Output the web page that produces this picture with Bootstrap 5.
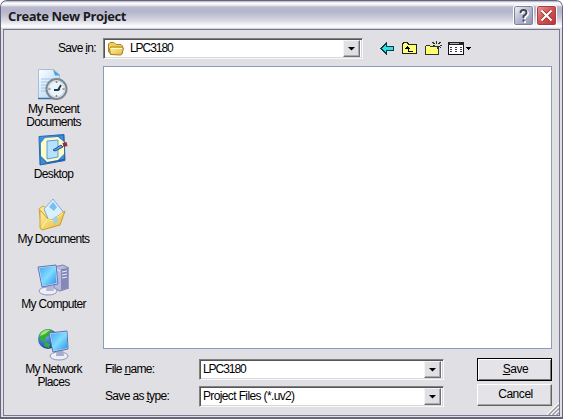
<!DOCTYPE html>
<html lang="en">
<head>
<meta charset="utf-8">
<meta name="viewport" content="width=device-width, initial-scale=1">
<title>Create New Project</title>
<link href="https://cdn.jsdelivr.net/npm/bootstrap@5.3.0/dist/css/bootstrap.min.css" rel="stylesheet">
<style>
html,body{height:100%;overflow:hidden;background:#fff}
body{font:12px/13px "Liberation Sans",Arial,sans-serif;letter-spacing:-.68px;color:#000}
svg{display:block;flex:none}
u{text-underline-offset:1px;text-decoration-thickness:1px}
.dialog{width:563px;height:419px;background:#e0dfe3;border:solid #65657f;border-width:1px 1px 2px;border-radius:7px 7px 0 0;overflow:hidden}
.titlebar{height:28px;padding:1px 5px 0 7px;background:linear-gradient(#a9a9bd 0,#fff 2px,#eeeef4 4px,#b9b9cf 6px,#b4b4cb 10px,#c0c0d3 14px,#d5d5e2 19px,#f4f4f8 24px,#fff 26px,#c8c8d6 28px)}
.titlebar h1{font:bold 13px/18px "Open Sans","Noto Sans",sans-serif;letter-spacing:-.4px;color:#1b1b20}
.cap{width:21px;height:21px;border:1px solid #fff;border-radius:3px;padding:0;overflow:hidden}
.cap-help{background:linear-gradient(135deg,#f3f4fa,#b5b8d0 50%,#9093af);box-shadow:inset 0 0 0 1px #7e8199}
.cap-close{background:linear-gradient(135deg,#e99b94,#cf524e 50%,#b83237);box-shadow:inset 0 0 0 1px #a63d45}
.client{height:387px;margin:0 2px;border:1px solid #77778e;border-top-color:#747488;display:grid;grid-template-columns:99px 449px;grid-template-rows:36px 283px 66px;position:relative}
.lookrow{padding:8px 0 7px}
.combo{height:21px;background:#fff;border:1px solid;border-color:#808080 #f8f8fa #f8f8fa #808080;box-shadow:inset 1px 1px #555,inset -1px -1px #d8d7dc;padding:2px 2px 2px 3px}
.combo-look{width:260px}
.combo-field{width:245px}
.code{letter-spacing:-1.05px}
.drop{width:17px;height:17px;background:#e0dfe3;border:1px solid;border-color:#f4f4f5 #707070 #707070 #f4f4f5;box-shadow:inset -1px -1px #aaa9ad}
.places{grid-row:2/4;padding-top:3px}
.place{height:65px;text-align:center}
.place svg{margin:0 0 1px 31px}
.filelist{background:#fff;border:1px solid #8a9db8}
.fields{display:grid;grid-template-columns:96px 245px 33px 75px;padding-top:9px;align-items:start}
.stack{display:grid;grid-template-rows:21px 21px;row-gap:6px;padding-top:1px}
.stack label{padding:4px 0 0 2px;letter-spacing:-.66px}
.buttons{display:grid;grid-template-rows:23px 22px;row-gap:3px}
.push{height:22px;background:#e4e3e7;border:1px solid;border-color:#fff #626262 #626262 #fff;box-shadow:inset -1px -1px #a4a3a8;font-size:12px;letter-spacing:-.45px;border-radius:0;padding:0 0 2px 2px;line-height:16px;color:#000}
.push-default{height:23px;border-color:#000;box-shadow:inset 1px 1px #fff,inset -1px -1px #77777a}
.grip{position:absolute;right:0;bottom:0}
</style>
</head>
<body>
<main class="dialog">
<header class="titlebar d-flex align-items-center">
<h1 class="m-0 me-auto">Create New Project</h1>
<div class="d-flex" style="gap:2px">
<button class="cap cap-help" aria-label="Help"><svg width="19" height="19" fill="none" stroke-width="2"><path d="M7 7q0-3 3-3t3 2.500q0 2-3 4V12M10 14v2" stroke="#fff" transform="translate(1 1)"/><path d="M6.500 7q0-3 3-3t3 2.500q0 2-3 3.500V12M9.500 13.500v2" stroke="#444554" stroke-width="1.800"/></svg></button>
<button class="cap cap-close" aria-label="Close"><svg width="19" height="19" fill="none"><path d="M5 5l9 9m0-9l-9 9" stroke="#8b2026" stroke-width="3.500"/><path d="M4.500 4.500l10 10m0-10l-10 10" stroke="#fff" stroke-width="2.200"/></svg></button>
</div>
</header>
<section class="client">
<div class="lookrow text-end" style="padding-right:7px"><div style="padding-top:4px">Save <u>i</u>n:</div></div>
<div class="lookrow d-flex">
<div class="combo combo-look d-flex align-items-center">
<svg width="18" height="16"><path d="M1.500 11V3l1.500-1.500h4l2 2h5l1.500 1.500v7l-2 1h-9z" fill="#f0cf55" stroke="#ad8724"/><path d="M3.500 13.500l-1-6 1.500-1.500h11.500l1 1-1.500 6-1.500 1z" fill="url(#gold)" stroke="#a87e20"/><path d="M4 7.500h11" stroke="#fffad0"/></svg>
<span class="me-auto code" style="margin-left:5px">LPC3180</span>
<span class="drop"><svg width="15" height="15"><path d="M4 6h7L7.500 9.500z"/></svg></span>
</div>
<svg class="ms-3" width="100" height="21" shape-rendering="crispEdges">
<path d="M2 10.500l5-5v3h7v4H7v3z" fill="#2ee0e6" stroke="#083c46"/>
<path d="M23.500 15.500v-9l1-2h4l1 2h8v9z" fill="#ffff72" stroke="#222"/><path d="M28 8l-3 3h2v0h2v3h5v-1h-4v-2h2z"/>
<path d="M46.500 16.500v-8l1-1h3l1 1h8v8z" fill="#ffff72" stroke="#333"/><path d="M57.500 3v3m-4-2l2 2m6-2l-2 2m1 1.500h2m-9 0h2m3 1v2m2-2l2 2" stroke="#34341e" fill="none"/>
<path d="M69.500 4.500h15v12h-15z" fill="#fff" stroke="#111"/><path d="M69 4h16v3H69z" fill="#222"/><path d="M71 9.500h3m2 0h3m2 0h3m-13 2h3m2 0h3m2 0h3m-13 2h3m2 0h3m2 0h3" stroke="#374050" stroke-dasharray="2 1"/><path d="M71 5.500h9" stroke="#aaa"/><path d="M87 9h5l-2.500 3z"/>
</svg>
</div>
<nav class="places" aria-label="Places">
<div class="place"><svg width="34" height="33" viewBox="0 0 34 33"><defs><linearGradient id="paper" x2="1" y2="1"><stop stop-color="#fff"/><stop offset="1" stop-color="#a8cff2"/></linearGradient><linearGradient id="screen" x2="1" y2="1"><stop stop-color="#4aa7f4"/><stop offset=".5" stop-color="#80dcff"/><stop offset="1" stop-color="#298de2"/></linearGradient><linearGradient id="gold" x2="1" y2="1"><stop stop-color="#fff1a0"/><stop offset="1" stop-color="#e8b83a"/></linearGradient><linearGradient id="blue" x2="1" y2="1"><stop stop-color="#4c9ee8"/><stop offset="1" stop-color="#104b9d"/></linearGradient><radialGradient id="globe" cx=".35" cy=".3" r=".75"><stop stop-color="#67b9f4"/><stop offset="1" stop-color="#0d429b"/></radialGradient></defs><path d="M3.500 .5h15l6 5v24h-21z" fill="url(#paper)" stroke="#a5bedb"/><path d="M18 .5l7 6h-5z" fill="#4c9ddd"/><path d="M6 10h12M6 13h8M6 16h6M6 19h5M6 22h5" stroke="#a0c4ec"/><path d="M3 29.500h18" stroke="#376fa9" stroke-width="1.500"/><circle cx="21.500" cy="20" r="10" fill="#e8f6fc" stroke="#7c8790" stroke-width="2"/><circle cx="21.500" cy="20" r="8" fill="none" stroke="#b8d6e8"/><path d="M19 21h4l3-5m-3 5l2-1" fill="none" stroke="#24394d" stroke-width="1.800"/><path d="M21.500 12v2m0 12v2m8-8h-2m-12 0h-2" stroke="#d6685c" stroke-width="1.500"/></svg>My Recent<br>Documents</div>
<div class="place"><svg width="34" height="33" viewBox="0 0 34 33"><path d="M4 2.500L29 .5l1 26L5 31z" fill="url(#blue)" stroke="#2a69b4"/><path d="M5 4h4L5 10zM24 2h4v5zM6 23l5 6-5 1zM29 20v5l-5 1z" fill="#3b8edb"/><path d="M10 4l13-1 6 5v12l-6 6-11 2-6-6V9z" fill="#fffbc4"/><path d="M12 7l11-1v17l-11 2z" fill="#b8e0ff" stroke="#5a9ddd"/><path d="M18 16l8-5 2 2-8 4z" fill="#5aa4db" stroke="#24558b"/><path d="M28 11l4-1" stroke="#8f3038" stroke-width="4"/></svg>Desktop</div>
<div class="place"><svg width="34" height="33" viewBox="0 0 34 33"><path d="M4 10l4-3 5 3 14 1v10L7 30z" fill="url(#gold)" stroke="#d5a33c"/><path d="M9 10l9-10 11 14-7 10-8-2z" fill="#d9f0ff" stroke="#80aee1"/><path d="M18 3l4 5-3 4-5-4z" fill="#7dbef0"/><path d="M5 29V11l8 9 4 1 13-9-5 14-18 5z" fill="url(#gold)" stroke="#cf9c30"/><path d="M7 28l6-8 4 2 11-8" fill="none" stroke="#fff3a6"/><path d="M17 20l4-3 3 4-4 5z" fill="#a6d0e0"/></svg>My Documents</div>
<div class="place"><svg width="34" height="33" viewBox="0 0 34 33"><path d="M19 3l9-2 6 3v20l-9 3-6-3z" fill="#b9bbdd" stroke="#7d7fac"/><path d="M26 5l7-1v20l-7 2z" fill="#8587b8"/><path d="M20 5l5 2m2 1l5-1m-5 4l5-1m-5 4l5-1" stroke="#ececff"/><ellipse cx="13" cy="27" rx="9" ry="4" fill="#eeeef7" stroke="#9095ba"/><path d="M12 21h6l1 6h-8z" fill="#b5b8d8"/><path d="M3 3l18-2 2 19-16 3z" fill="#c8dcf8" stroke="#6275b2"/><path d="M4.500 4l16-2 1 17-14 3z" fill="url(#screen)"/></svg>My Computer</div>
<div class="place"><svg width="34" height="33" viewBox="0 0 34 33"><circle cx="13" cy="10" r="10" fill="url(#globe)"/><path d="M5 4q5-5 12-3l-1 5-5 2-1 5-6-3zM10 13l5 2-1 4-5-2z" fill="#3aad38"/><path d="M6 4q4-4 9-3l-5 4-5 2z" fill="#a4e56c"/><ellipse cx="24" cy="27" rx="9" ry="4" fill="#eeeef7" stroke="#9095ba"/><path d="M22 20h6l1 7h-8z" fill="#a9accf"/><path d="M14 4l18-2 1 18-15 3z" fill="#c8dcf8" stroke="#5571ac"/><path d="M15.500 5l16-2 1 16-14 3z" fill="url(#screen)"/></svg>My Network<br>Places</div>
</nav>
<div class="filelist" role="listbox" aria-label="Files"></div>
<form class="fields">
<div class="stack"><label>File <u>n</u>ame:</label><label>Save as <u>t</u>ype:</label></div>
<div class="stack">
<div class="combo combo-field d-flex align-items-center"><span class="me-auto code">LPC3180</span><span class="drop"><svg width="15" height="15"><path d="M4 6h7L7.500 9.500z"/></svg></span></div>
<div class="combo combo-field d-flex align-items-center"><span class="me-auto" style="letter-spacing:-.63px">Project Files (*.uv2)</span><span class="drop"><svg width="15" height="15"><path d="M4 6h7L7.500 9.500z"/></svg></span></div>
</div>
<span></span>
<div class="buttons"><button type="button" class="btn push push-default"><u>S</u>ave</button><button type="button" class="btn push">Cancel</button></div>
</form>
<svg class="grip" width="12" height="12"><path d="M0 12L12 0M4 12l8-8M8 12l4-4" stroke="#fff" stroke-width="1.500"/><path d="M1.500 12L12 1.500M5.500 12L12 5.500M9.500 12L12 9.500" stroke="#9c9ba1" stroke-width="1.500"/></svg>
</section>
</main>
<script src="https://cdn.jsdelivr.net/npm/bootstrap@5.3.0/dist/js/bootstrap.bundle.min.js"></script>
</body>
</html>
